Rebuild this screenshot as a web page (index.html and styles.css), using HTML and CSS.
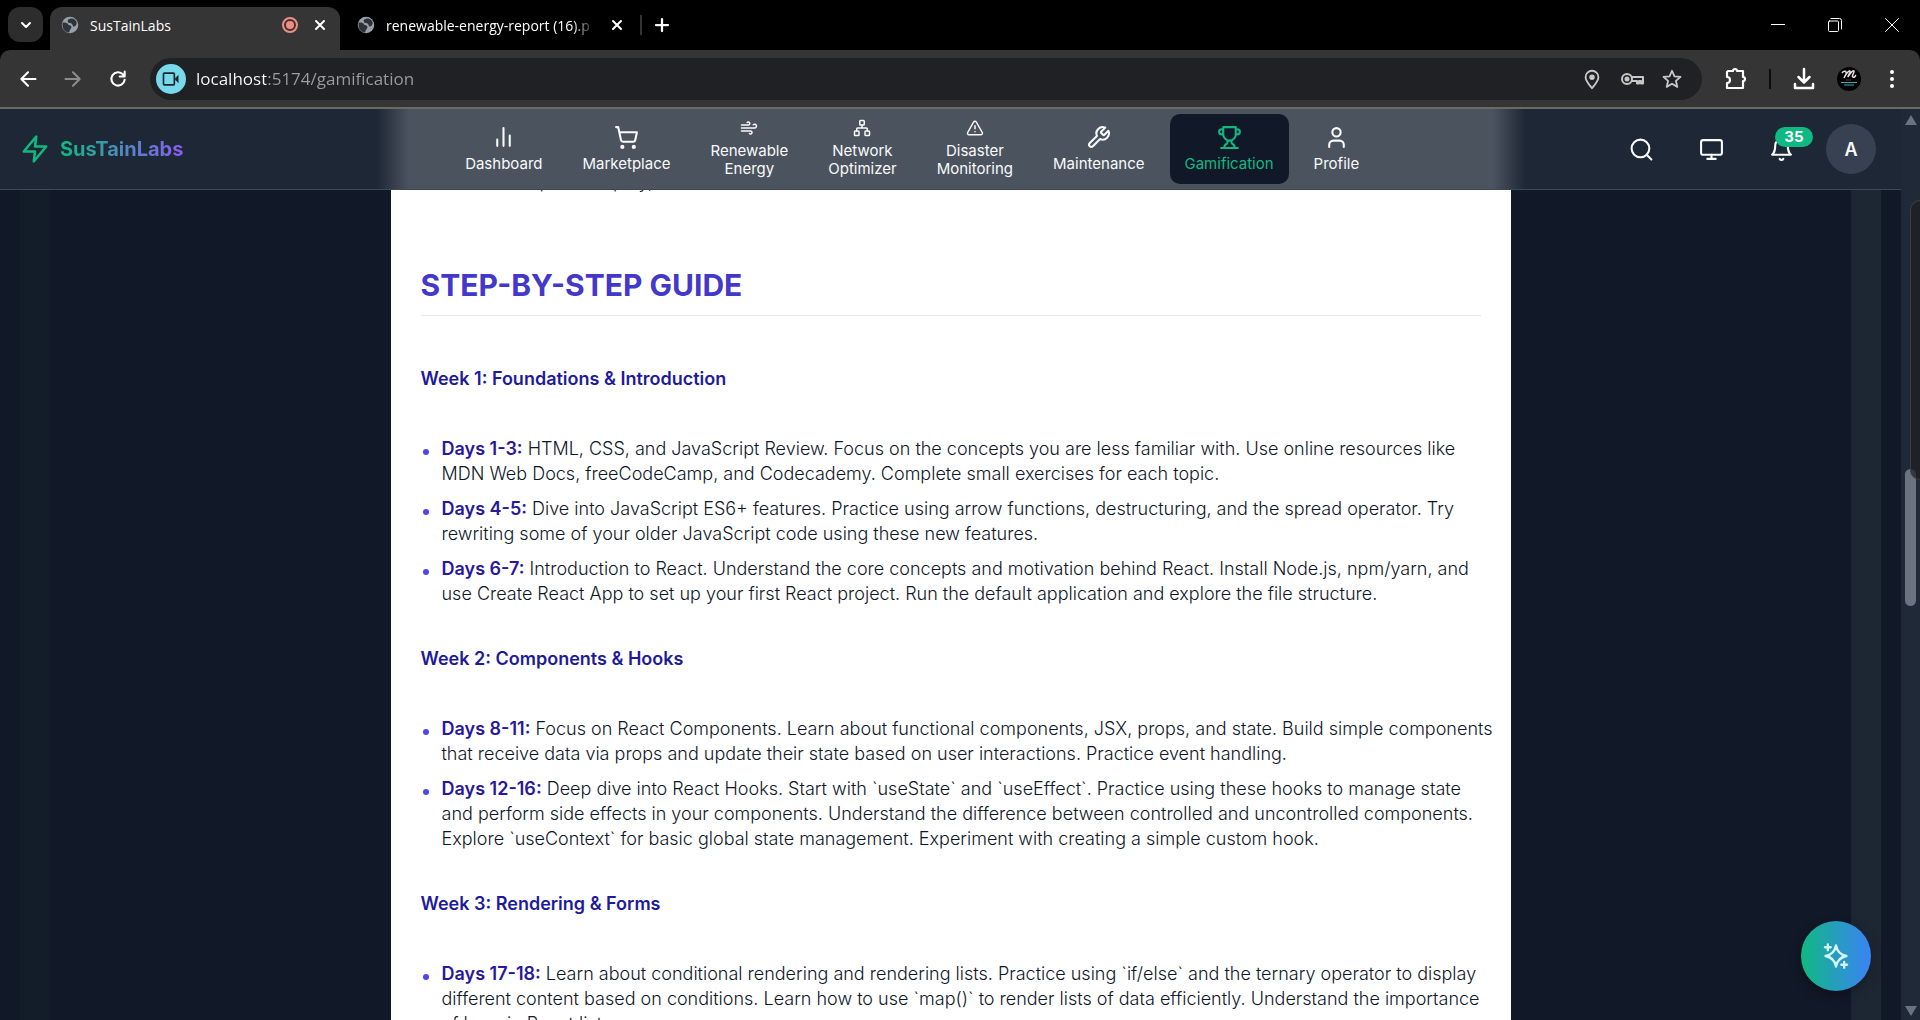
FILE: index.html
```html
<!DOCTYPE html>
<html lang="en">
<head>
  <meta charset="UTF-8">
  <meta name="viewport" content="width=device-width, initial-scale=1.0">
  <title>SusTainLabs</title>
  <link rel="stylesheet" href="styles.css">
</head>
<body>
  <div class="tab-strip">
    <button class="tab-search" aria-label="Search tabs"><svg class="icon" width="16" height="16" viewBox="0 0 24 24"><path d="M6 9l6 6 6-6" stroke-width="3"/></svg></button>
    <div class="tab active">
      <svg class="globe" width="18" height="18" viewBox="0 0 24 24"><circle cx="12" cy="12" r="11"/><path d="M2 9c5-1 7 1 8 3 2 0 4 1 4 3s-3 3-3 7c-6 0-9-5-9-10zM11 4c5-2 9 1 10 5 0 3-2 5-4 5s-1-3-3-4-5 0-5-3 1-2 2-3z"/></svg>
      <span class="tab-title">SusTainLabs</span>
      <svg class="recording" width="18" height="18" viewBox="0 0 18 18"><circle cx="9" cy="9" r="7" fill="none" stroke="#f28b82" stroke-width="2"/><circle cx="9" cy="9" r="4" fill="#f28b82"/></svg>
      <button class="tab-close" aria-label="Close tab"><svg class="icon" width="16" height="16" viewBox="0 0 24 24"><path d="M6 6l12 12M18 6L6 18" stroke-width="3"/></svg></button>
    </div>
    <div class="tab">
      <svg class="globe" width="18" height="18" viewBox="0 0 24 24"><circle cx="12" cy="12" r="11"/><path d="M2 9c5-1 7 1 8 3 2 0 4 1 4 3s-3 3-3 7c-6 0-9-5-9-10zM11 4c5-2 9 1 10 5 0 3-2 5-4 5s-1-3-3-4-5 0-5-3 1-2 2-3z"/></svg>
      <span class="tab-title fade">renewable-energy-report (16).p</span>
      <button class="tab-close" aria-label="Close tab"><svg class="icon" width="16" height="16" viewBox="0 0 24 24"><path d="M6 6l12 12M18 6L6 18" stroke-width="3"/></svg></button>
    </div>
    <button class="new-tab" aria-label="New tab"><svg class="icon" width="18" height="18" viewBox="0 0 24 24"><path d="M12 4v16M4 12h16" stroke-width="3"/></svg></button>
    <div class="window-controls">
      <button aria-label="Minimize"><svg class="icon thin" width="14" height="14" viewBox="0 0 14 14"><path d="M0 6.500h14"/></svg></button>
      <button aria-label="Restore"><svg class="icon thin" width="14" height="14" viewBox="0 0 14 14"><rect x="0.500" y="3" width="10" height="10.500" rx="1"/><path d="M3 .5h8.500a2 2 0 0 1 2 2V11"/></svg></button>
      <button aria-label="Close"><svg class="icon thin" width="14" height="14" viewBox="0 0 14 14"><path d="M.5.5l13 13M13.500.5l-13 13"/></svg></button>
    </div>
  </div>

  <div class="toolbar">
    <button aria-label="Back"><svg class="icon" width="20" height="20" viewBox="0 0 24 24"><path d="M21 12H4M12 4l-8 8 8 8" stroke-width="2.500"/></svg></button>
    <button class="dim" aria-label="Forward"><svg class="icon" width="20" height="20" viewBox="0 0 24 24"><path d="M3 12h17M12 4l8 8-8 8" stroke-width="2.500"/></svg></button>
    <button aria-label="Reload"><svg class="icon" width="20" height="20" viewBox="0 0 24 24"><path d="M20 13a8 8 0 1 1-2-6.500L20 9M20 3v6h-6" stroke-width="2.500"/></svg></button>
    <div class="omnibox">
      <span class="camera"><svg class="icon" width="20" height="20" viewBox="0 0 24 24"><rect x="3" y="5" width="13" height="14" rx="1"/><path d="M17 11l4-4v10l-4-4z" fill="currentColor" stroke="none"/></svg></span>
      <input class="url" type="text" aria-label="Address" value="localhost:5174/gamification">
      <button aria-label="Location"><svg class="icon" width="22" height="22" viewBox="0 0 24 24"><path d="M12 22c-4-5-7-8-7-12a7 7 0 0 1 14 0c0 4-3 7-7 12z"/><circle cx="12" cy="10" r="2" fill="currentColor"/></svg></button>
      <button aria-label="Passwords"><svg class="icon" width="24" height="24" viewBox="0 0 24 24"><circle cx="7" cy="12" r="5"/><circle cx="7" cy="12" r="1.500" fill="currentColor"/><path d="M12 10h11v6.500h-2V14h-2v2.500h-2V14h-5"/></svg></button>
      <button aria-label="Bookmark"><svg class="icon" width="22" height="22" viewBox="0 0 24 24"><path d="M12 3l2.700 6.100 6.600.6-5 4.400 1.500 6.500-5.800-3.400-5.800 3.400 1.500-6.500-5-4.400 6.600-.6z"/></svg></button>
    </div>
    <div class="toolbar-right">
      <button aria-label="Extensions"><svg class="icon" width="24" height="24" viewBox="0 0 24 24"><path d="M4 4h5a2 2 0 0 1 4 0h6v6a2 2 0 0 1 0 4v7H3v-5a3 3 0 0 0 0-6V5z" stroke-width="2.200"/></svg></button>
      <span class="divider"></span>
      <button aria-label="Downloads"><svg class="icon" width="24" height="24" viewBox="0 0 24 24"><path d="M12 2v13M6.500 10l5.500 5.500 5.500-5.500M3 17v4h18v-4" stroke-width="2.500"/></svg></button>
      <button class="profile" aria-label="Browser profile"><svg width="24" height="24" viewBox="0 0 24 24"><circle cx="12" cy="12" r="12" fill="#000"/><path d="M5 6c2-3 5-2 4 1l-2 4c2-4 5-8 6-7s-2 4-2 6c2-4 5-7 6-6s-3 5-1 6 2-1 3-2" fill="none" stroke="#e6dfe2" stroke-width="1.500"/><path d="M9 13h5" stroke="#8d2334"/><path d="M4 15.500h16M7 18h10" stroke="#37b5bd"/></svg></button>
      <button aria-label="Menu"><svg width="20" height="20" viewBox="0 0 20 20" fill="#fff"><circle cx="10" cy="3" r="2"/><circle cx="10" cy="10" r="2"/><circle cx="10" cy="17" r="2"/></svg></button>
    </div>
  </div>

  <div class="viewport">
    <div class="page">
      <header class="header">
        <a class="brand" href="#">
          <svg class="icon" width="30" height="30" viewBox="0 0 24 24"><path d="M13 2L3 14h9l-1 8 10-12h-9l1-8z"/></svg>
          <span>SusTainLabs</span>
        </a>
        <nav class="nav">
          <a href="#"><svg class="icon" width="25" height="25" viewBox="0 0 24 24"><path d="M18 20V10M12 20V3M6 20v-6"/></svg>Dashboard</a>
          <a href="#"><svg class="icon" width="25" height="25" viewBox="0 0 24 24"><circle cx="8" cy="21" r="1"/><circle cx="19" cy="21" r="1"/><path d="M2 2h2l2.700 12.400a2 2 0 0 0 2 1.600h9.700a2 2 0 0 0 2-1.600L22 7H5.100"/></svg>Marketplace</a>
          <a class="two-line" href="#"><svg class="icon" width="18" height="18" viewBox="0 0 24 24"><path d="M17.700 7.700A2.500 2.500 0 1 1 19.500 12H2M9.600 4.600A2 2 0 1 1 11 8H2M12.600 19.400A2 2 0 1 0 14 16H2"/></svg>Renewable<br>Energy</a>
          <a class="two-line" href="#"><svg class="icon" width="18" height="18" viewBox="0 0 24 24"><rect x="16" y="16" width="6" height="6" rx="1"/><rect x="2" y="16" width="6" height="6" rx="1"/><rect x="9" y="2" width="6" height="6" rx="1"/><path d="M5 16v-3a1 1 0 0 1 1-1h12a1 1 0 0 1 1 1v3M12 12V8"/></svg>Network<br>Optimizer</a>
          <a class="two-line" href="#"><svg class="icon" width="18" height="18" viewBox="0 0 24 24"><path d="M21.700 18l-8-14a2 2 0 0 0-3.500 0l-8 14A2 2 0 0 0 4 21h16a2 2 0 0 0 1.700-3zM12 9v4M12 17h.01"/></svg>Disaster<br>Monitoring</a>
          <a href="#"><svg class="icon" width="25" height="25" viewBox="0 0 24 24"><path d="M14.700 6.300a1 1 0 0 0 0 1.400l1.600 1.600a1 1 0 0 0 1.400 0l3.770-3.770a6 6 0 0 1-7.940 7.940l-6.910 6.910a2.120 2.120 0 0 1-3-3l6.910-6.910a6 6 0 0 1 7.940-7.940l-3.760 3.760z"/></svg>Maintenance</a>
          <a class="current" href="#"><svg class="icon" width="25" height="25" viewBox="0 0 24 24"><path d="M6 9H4.500a2.500 2.500 0 0 1 0-5H6M18 9h1.500a2.500 2.500 0 0 0 0-5H18M4 22h16M10 14.660V17c0 .55-.47.980-.97 1.210C7.850 18.750 7 20.240 7 22M14 14.660V17c0 .55.470.980.970 1.210C16.150 18.750 17 20.240 17 22M18 2H6v7a6 6 0 0 0 12 0V2z"/></svg>Gamification</a>
          <a href="#"><svg class="icon" width="25" height="25" viewBox="0 0 24 24"><path d="M19 21v-2a4 4 0 0 0-4-4H9a4 4 0 0 0-4 4v2"/><circle cx="12" cy="7" r="4"/></svg>Profile</a>
        </nav>
        <div class="actions">
          <button aria-label="Search"><svg class="icon" width="25" height="25" viewBox="0 0 24 24"><circle cx="11" cy="11" r="8.500"/><path d="M21.500 21.500L17 17"/></svg></button>
          <button aria-label="Display"><svg class="icon" width="25" height="25" viewBox="0 0 24 24"><rect x="2" y="3" width="20" height="14" rx="2"/><path d="M8 21h8M12 17v4"/></svg></button>
          <button class="bell" aria-label="Notifications"><svg class="icon" width="25" height="25" viewBox="0 0 24 24"><path d="M6 8a6 6 0 0 1 12 0c0 7 3 9 3 9H3s3-2 3-9M10.300 21a1.940 1.940 0 0 0 3.400 0"/></svg><span class="badge">35</span></button>
          <button class="avatar">A</button>
        </div>
      </header>

      <main class="backdrop">
        <article class="guide">
          <ul>
            <li>Learn to ship and deploy,</li>
          </ul>
          <h2>STEP-BY-STEP GUIDE</h2>
          <h3>Week 1: Foundations &amp; Introduction</h3>
          <ul>
            <li><strong>Days 1-3:</strong> HTML, CSS, and JavaScript Review. Focus on the concepts you are less familiar with. Use online resources like MDN Web Docs, freeCodeCamp, and Codecademy. Complete small exercises for each topic.</li>
            <li><strong>Days 4-5:</strong> Dive into JavaScript ES6+ features. Practice using arrow functions, destructuring, and the spread operator. Try rewriting some of your older JavaScript code using these new features.</li>
            <li><strong>Days 6-7:</strong> Introduction to React. Understand the core concepts and motivation behind React. Install Node.js, npm/yarn, and use Create React App to set up your first React project. Run the default application and explore the file structure.</li>
          </ul>
          <h3>Week 2: Components &amp; Hooks</h3>
          <ul>
            <li><strong>Days 8-11:</strong> Focus on React Components. Learn about functional components, JSX, props, and state. Build simple components that receive data via props and update their state based on user interactions. Practice event handling.</li>
            <li><strong>Days 12-16:</strong> Deep dive into React Hooks. Start with `useState` and `useEffect`. Practice using these hooks to manage state and&nbsp;perform side effects in your components. Understand the difference between controlled and uncontrolled components. Explore `useContext` for basic global state management. Experiment with creating a simple custom hook.</li>
          </ul>
          <h3>Week 3: Rendering &amp; Forms</h3>
          <ul>
            <li><strong>Days 17-18:</strong> Learn about conditional rendering and rendering lists. Practice using `if/else` and the ternary operator to display different content based on conditions. Learn how to use `map()` to render lists of data efficiently. Understand the importance of&nbsp;keys in React lists.</li>
          </ul>
        </article>
      </main>
      <button class="assistant" aria-label="Assistant"><svg class="icon" width="28" height="28" viewBox="0 0 24 24"><path d="M12 3c1 5.500 3.500 8 9 9-5.500 1-8 3.500-9 9-1-5.500-3.500-8-9-9 5.500-1 8-3.500 9-9zM5 2v5M2.500 4.500h5M19 17v5M16.500 19.500h5"/></svg></button>
    </div>
    <div class="scrollbar">
      <span class="arrow up"></span>
      <span class="thumb"></span>
      <span class="side-panel"></span>
      <span class="arrow down"></span>
    </div>
  </div>
</body>
</html>
```

FILE: styles.css
```css
* {
  box-sizing: border-box;
}
body {
  margin: 0;
  height: 100vh;
  display: flex;
  flex-direction: column;
  overflow: hidden;
  background: #000;
  color: #f9fafb;
  font-family: Inter, sans-serif;
}
button {
  display: flex;
  align-items: center;
  justify-content: center;
  padding: 0;
  border: none;
  background: none;
  color: inherit;
  font: inherit;
  cursor: pointer;
}
a {
  color: inherit;
  text-decoration: none;
}
.icon {
  fill: none;
  stroke: currentColor;
  stroke-width: 2;
  stroke-linecap: round;
  stroke-linejoin: round;
  flex-shrink: 0;
}
.icon.thin {
  stroke-width: 1;
}

/* browser tabs */
.tab-strip {
  display: flex;
  height: 50px;
  padding: 7px 0 0 8px;
  font: 14px "Open Sans", sans-serif;
  color: #fff;
}
.tab-search {
  width: 35px;
  height: 35px;
  border-radius: 12px;
  background: #2d2d2d;
}
.tab {
  display: flex;
  align-items: center;
  width: 300px;
  padding: 0 15px 7px 17px;
}
.tab.active {
  width: 290px;
  margin-left: 7px;
  padding-left: 11px;
  padding-right: 12px;
  border-radius: 12px 12px 0 0;
  background: #353535;
}
.globe {
  flex-shrink: 0;
  fill: #9aa0a9;
}
.globe path {
  fill: #30343a;
}
.tab-title {
  flex: 1;
  margin-left: 11px;
  overflow: hidden;
  white-space: nowrap;
}
.tab-title.fade {
  mask-image: linear-gradient(to left, transparent, #000 24px);
}
.tab-close {
  width: 16px;
  height: 16px;
  margin-left: 13px;
}
.new-tab {
  width: 42px;
  height: 20px;
  margin-top: 8px;
  border-left: 2px solid #333;
}
.window-controls {
  display: flex;
  margin-left: auto;
}
.window-controls button {
  width: 57px;
  height: 36px;
}

/* address bar */
.toolbar {
  display: flex;
  align-items: center;
  height: 59px;
  padding-left: 5px;
  background: #353535;
  border-bottom: 2px solid #6a6964;
  border-radius: 10px 10px 0 0;
  color: #fff;
}
.toolbar > button {
  width: 45px;
  height: 40px;
}
.toolbar .dim {
  color: #8c8c8c;
}
.omnibox {
  display: flex;
  flex: 1;
  align-items: center;
  height: 42px;
  margin-left: 10px;
  padding: 0 10px 0 6px;
  border-radius: 21px;
  background: #202124;
  color: #c7c7c7;
}
.omnibox button {
  width: 40px;
  height: 40px;
}
.camera {
  display: flex;
  align-items: center;
  justify-content: center;
  width: 30px;
  height: 30px;
  border-radius: 50%;
  background: #78d9ec;
  color: #17272b;
}
.url {
  flex: 1;
  height: 40px;
  margin-left: 10px;
  padding: 0;
  border: none;
  outline: none;
  background: linear-gradient(to right, #fff 70px, #9a9da1 70px);
  background-clip: text;
  color: transparent;
  font: 17px "Open Sans", sans-serif;
}
.toolbar-right {
  display: flex;
  align-items: center;
  justify-content: space-between;
  width: 218px;
  padding: 0 18px 0 22px;
}
.divider {
  width: 2px;
  height: 20px;
  background: #0c0c0c;
}

/* web page */
.viewport {
  display: flex;
  flex: 1;
  min-height: 0;
}
.page {
  position: relative;
  flex: 1;
  overflow: hidden;
  background: #111827;
}
.header {
  position: absolute;
  top: 0;
  left: 0;
  right: 0;
  z-index: 10;
  display: grid;
  grid-template-columns: 6fr auto 7fr;
  align-items: center;
  height: 81px;
  padding: 0 25px 0 20px;
  background: #1e2735;
  border-bottom: 1px solid #3f4856;
}
.header::before {
  content: "";
  position: absolute;
  inset: 0;
  z-index: -1;
  max-width: 1148px;
  margin: 0 auto;
  background: linear-gradient(to right, transparent, #4b535f 32px, #4b535f calc(100% - 32px), transparent);
}
.brand {
  display: flex;
  align-items: center;
  gap: 10px;
  color: #10b981;
  font-size: 20px;
  font-weight: 700;
}
.brand span {
  background: linear-gradient(to right, #10b981, #8b5cf6);
  background-clip: text;
  color: transparent;
}
.nav {
  display: flex;
  gap: 10px;
}
.nav a {
  display: flex;
  flex-direction: column;
  align-items: center;
  justify-content: center;
  gap: 5px;
  height: 70px;
  padding: 0 15px;
  border-radius: 10px;
  font-size: 15px;
  line-height: 18px;
  text-align: center;
}
.nav a.two-line {
  display: block;
}
.two-line .icon {
  display: block;
  margin: 5px auto;
}
.nav a.current {
  background: #111827;
  color: #10b981;
}
.actions {
  display: flex;
  align-items: center;
  justify-content: flex-end;
  gap: 20px;
}
.actions button {
  position: relative;
  width: 50px;
  height: 50px;
}
.badge {
  position: absolute;
  top: 3px;
  left: 19px;
  width: 38px;
  border-radius: 10px;
  background: #10b981;
  font-size: 15px;
  font-weight: 700;
  line-height: 20px;
  text-align: center;
}
.actions .avatar {
  border-radius: 50%;
  background: #374151;
  font-size: 18px;
  font-weight: 600;
}
.backdrop {
  display: flex;
  justify-content: center;
  min-height: 100%;
  margin: 0 20px;
  border-left: 30px solid #131d2a;
  border-right: 30px solid #1d2733;
}
.guide {
  flex: 0 1 1120px;
  padding: 60px 30px 0;
  background: #fff;
  color: #0f172a;
  font-size: 18px;
  font-weight: 300;
  line-height: 25px;
}
.guide h2 {
  margin: 72px 0 50px;
  padding-bottom: 11px;
  border-bottom: 1px solid #e5e7eb;
  color: #4338ca;
  font-size: 30px;
  font-weight: 700;
  line-height: 38px;
}
.guide h3 {
  margin: 0 0 44px;
  color: #1e1b9b;
  font-size: 18px;
  font-weight: 600;
  line-height: 26px;
}
.guide ul {
  margin: 0 -14px 40px 0;
  padding: 0;
  list-style: none;
}
.guide li {
  position: relative;
  margin-bottom: 10px;
  padding-left: 21px;
}
.guide li::before {
  content: "";
  position: absolute;
  left: 2px;
  top: 13px;
  width: 6px;
  height: 6px;
  border-radius: 50%;
  background: #4f46e5;
}
.guide strong {
  color: #27189c;
  font-weight: 600;
}
.assistant {
  position: absolute;
  right: 30px;
  bottom: 29px;
  width: 70px;
  height: 70px;
  border-radius: 50%;
  background: linear-gradient(to right, #10b981, #3b82f6);
  box-shadow: 0 4px 12px rgba(0, 0, 0, 0.3);
  color: #d5f2f5;
}
.scrollbar {
  position: relative;
  display: flex;
  flex-direction: column;
  align-items: center;
  justify-content: space-between;
  width: 19px;
  padding: 6px 0 4px;
  background: #1f2937;
}
.arrow {
  border: 6px solid transparent;
}
.arrow.up {
  border-top: none;
  border-bottom: 10px solid #6b7280;
}
.arrow.down {
  border-bottom: none;
  border-top: 10px solid #6b7280;
}
.thumb {
  position: absolute;
  top: 360px;
  left: 4px;
  width: 11px;
  height: 137px;
  border-radius: 6px;
  background: #6b7280;
}
.side-panel {
  position: absolute;
  top: 91px;
  right: 0;
  width: 10px;
  height: 280px;
  border: 1px solid #3b4048;
  border-right: none;
  border-radius: 10px 0 0 10px;
  background: rgba(30, 30, 30, 0.7);
}
```
